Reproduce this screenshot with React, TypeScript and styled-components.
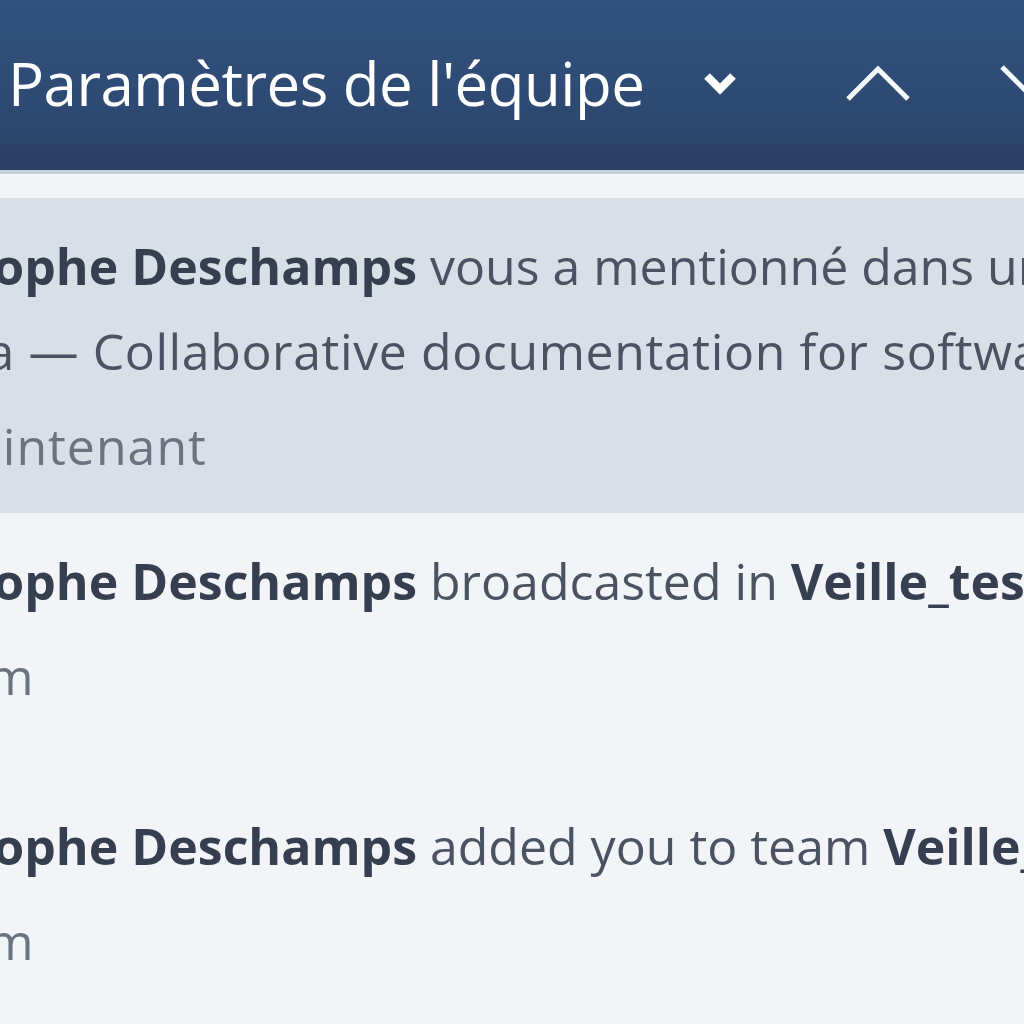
import React from "react";
import styled, { createGlobalStyle } from "styled-components";

const GlobalStyle = createGlobalStyle`
  html, body {
    margin: 0;
    padding: 0;
    background: #f2f4f7;
    overflow: hidden;
  }
  body {
    font-family: "Open Sans", "Noto Sans", sans-serif;
  }
`;

const Page = styled.div`
  width: 1024px;
  height: 1024px;
  overflow: hidden;
  background: #f2f4f7;
`;

const Header = styled.header`
  height: 170px;
  display: flex;
  align-items: center;
  padding-left: 8px;
  padding-bottom: 4px;
  box-sizing: border-box;
  background: linear-gradient(180deg, #31527e 0%, #2e4a73 60%, #2a4062 100%);
  white-space: nowrap;
`;

const Title = styled.h1`
  margin: 0;
  font-size: 60px;
  font-weight: 400;
  color: #ffffff;
  letter-spacing: -0.5px;
`;

const HeaderIcon = styled.span<{ $gap: number }>`
  display: flex;
  flex-shrink: 0;
  margin-left: ${(p) => p.$gap}px;
`;

const Divider = styled.div`
  height: 4px;
  background: #c6d1de;
`;

const List = styled.ul`
  list-style: none;
  margin: 0;
  padding: 24px 0 0;
`;

const Row = styled.li<{ $unread?: boolean }>`
  min-height: 265px;
  box-sizing: border-box;
  padding: 26px 0 24px;
  background: ${(p) => (p.$unread ? "#d9dfe7" : "#f2f4f7")};
`;

const Body = styled.div`
  margin-left: -156px;
  font-size: 50px;
  line-height: 85px;
  white-space: nowrap;
`;

const Line = styled.div<{ $loose?: boolean }>`
  color: #4b5363;
  overflow: hidden;
  letter-spacing: ${(p) => (p.$loose ? "0.6px" : "0")};
`;

const Strong = styled.b`
  font-weight: 700;
  color: #363f50;
`;

const Time = styled.div`
  margin-top: 10px;
  padding-left: 84px;
  letter-spacing: 1px;
  color: #6b7280;
`;

const CaretDown = () => (
  <svg width="36" height="26" viewBox="0 0 36 26">
    <path d="M5 6 L18 19 L31 6" fill="none" stroke="#ffffff" strokeWidth="8" />
  </svg>
);

const ChevronUp = () => (
  <svg width="68" height="40" viewBox="0 0 68 40">
    <path d="M4 36 L34 6 L64 36" fill="none" stroke="#f4f7fb" strokeWidth="5" />
  </svg>
);

const ChevronDown = () => (
  <svg width="68" height="40" viewBox="0 0 68 40">
    <path d="M4 4 L34 34 L64 4" fill="none" stroke="#f4f7fb" strokeWidth="5" />
  </svg>
);

type Notice = {
  action: React.ReactNode;
  preview?: React.ReactNode;
  time: string;
  unread?: boolean;
};

const notices: Notice[] = [
  {
    action: <>vous a mentionné dans un commentaire</>,
    preview: <>Notelia — Collaborative documentation for software teams</>,
    time: "Maintenant",
    unread: true,
  },
  {
    action: (
      <>
        broadcasted in <Strong>Veille_test</Strong>
      </>
    ),
    time: "25m",
  },
  {
    action: (
      <>
        added you to team <Strong>Veille_test</Strong>
      </>
    ),
    time: "25m",
  },
];

export default function App() {
  return (
    <Page>
      <GlobalStyle />
      <Header>
        <Title>Paramètres de l'équipe</Title>
        <HeaderIcon $gap={58}>
          <CaretDown />
        </HeaderIcon>
        <HeaderIcon $gap={106}>
          <ChevronUp />
        </HeaderIcon>
        <HeaderIcon $gap={86}>
          <ChevronDown />
        </HeaderIcon>
      </Header>
      <Divider />
      <List>
        {notices.map((n, i) => (
          <Row key={i} $unread={n.unread}>
            <Body>
              <Line>
                <Strong>Christophe Deschamps</Strong> {n.action}
              </Line>
              {n.preview && <Line $loose>{n.preview}</Line>}
              <Time>{n.time}</Time>
            </Body>
          </Row>
        ))}
      </List>
    </Page>
  );
}
